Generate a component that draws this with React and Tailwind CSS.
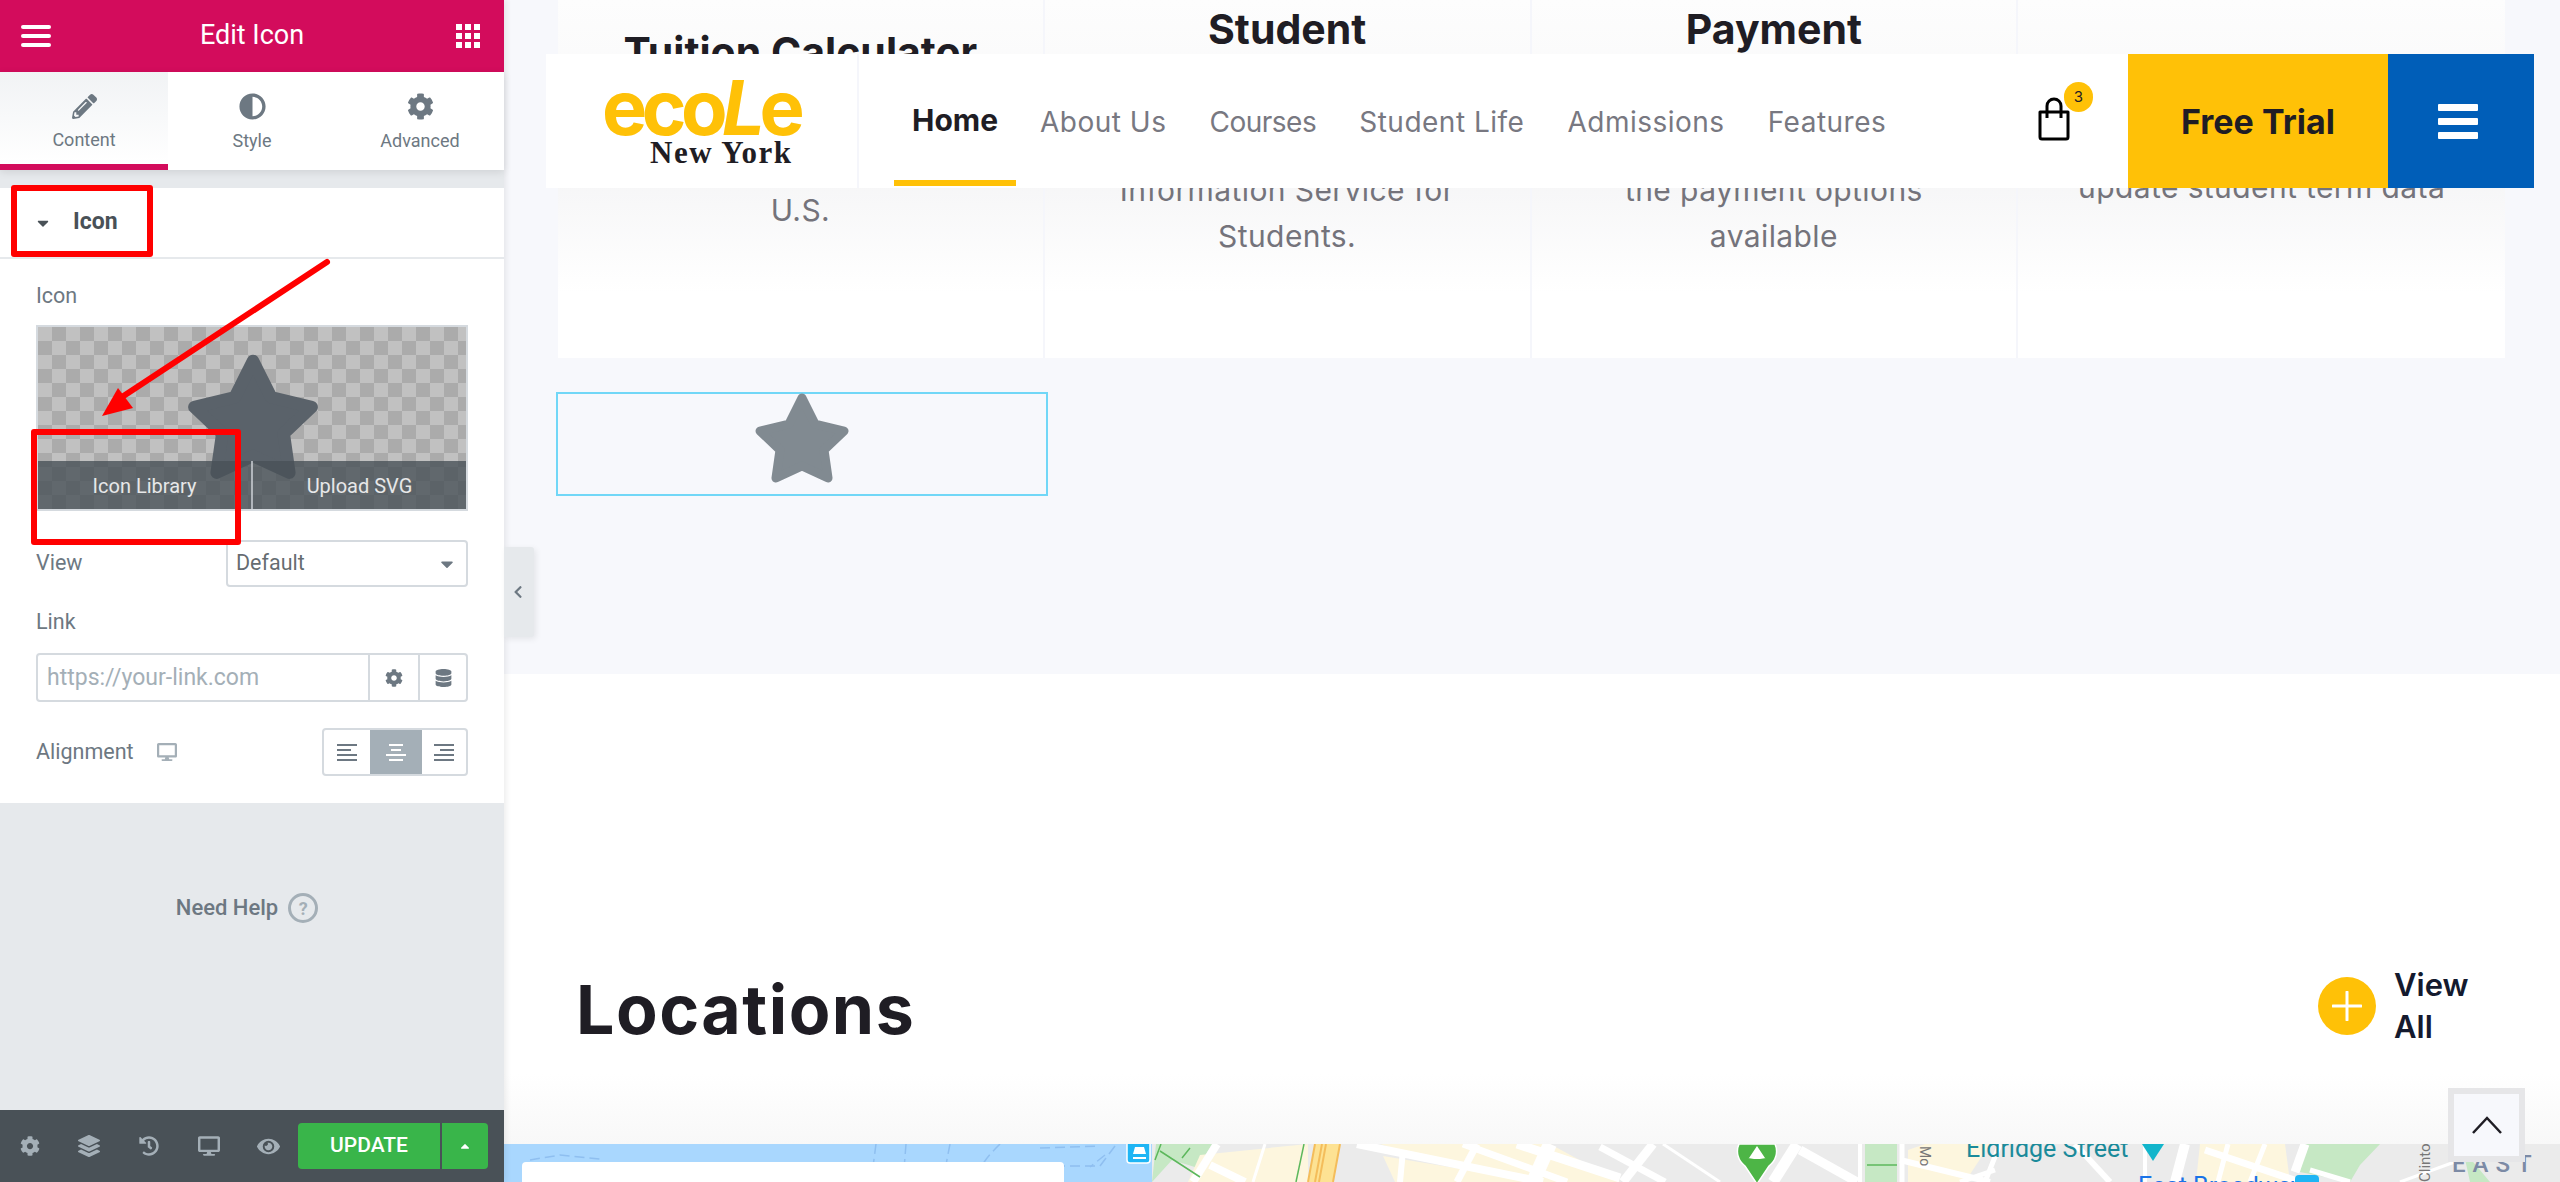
import React from 'react';
import { FaPencilAlt, FaAdjust, FaCog, FaDatabase, FaLayerGroup, FaHistory, FaDesktop, FaEye, FaCaretDown, FaCaretUp, FaChevronLeft } from 'react-icons/fa';

const sans = 'font-["Roboto",sans-serif]';
const site = 'font-["Inter",sans-serif]';

function Star({ className }) {
  return (
    <svg viewBox="0 0 96 91" className={className} fill="currentColor" stroke="currentColor" strokeWidth="9" strokeLinejoin="round">
      <polygon points="48,5 61,31 90,38 70,57 74,85 48,73 22,85 26,57 6,38 35,31" />
    </svg>
  );
}

function AlignIcon({ side, className }) {
  const rows = side === 'left' ? [[0, 20], [0, 14], [0, 20], [0, 20]] : side === 'center' ? [[3, 14], [5, 10], [0, 20], [3, 14]] : [[0, 20], [6, 14], [0, 20], [0, 20]];
  return (
    <svg viewBox="0 0 20 18" className={className} fill="currentColor">
      {rows.map((r, i) => <rect key={i} x={r[0]} y={1 + i * 5} width={r[1]} height="2" />)}
    </svg>
  );
}

function Sidebar() {
  return (
    <aside className={`w-[504px] h-full flex flex-col shrink-0 bg-[#e6e9ec] ${sans} shadow-[2px_0_6px_rgba(0,0,0,0.08)] z-10`}>
      <div className="h-[72px] bg-[#d30c5c] flex items-center justify-between pl-[21px] pr-[24px] text-white">
        <svg viewBox="0 0 30 22" className="w-[30px] h-[22px]" fill="currentColor">
          <rect y="0" width="30" height="4" rx="2" /><rect y="9" width="30" height="4" rx="2" /><rect y="18" width="30" height="4" rx="2" />
        </svg>
        <span className="text-[27px] -ml-[3px] -mt-[2px]">Edit Icon</span>
        <svg viewBox="0 0 24 24" className="w-[24px] h-[24px]" fill="currentColor">
          {[0, 9, 18].flatMap((x) => [0, 9, 18].map((y) => <rect key={`${x}-${y}`} x={x} y={y} width="6" height="6" />))}
        </svg>
      </div>
      <div className="h-[98px] bg-white grid grid-cols-3 shadow-[0_2px_8px_rgba(0,0,0,0.1)] text-[#6d7882] text-[18px]">
        <div className="flex flex-col items-center pt-[22px] gap-[7px] border-b-[6px] border-[#d30c5c] bg-gradient-to-b from-[#f1f3f5] to-white">
          <FaPencilAlt className="w-[25px] h-[25px]" />
          <span>Content</span>
        </div>
        <div className="flex flex-col items-center pt-[21px] gap-[7px]">
          <FaAdjust className="w-[27px] h-[27px]" />
          <span>Style</span>
        </div>
        <div className="flex flex-col items-center pt-[21px] gap-[7px]">
          <FaCog className="w-[27px] h-[27px]" />
          <span>Advanced</span>
        </div>
      </div>
      <div className="mt-[18px] bg-white h-[615px]">
        <div className="h-[71px] flex items-center border-b-2 border-[#e6e9ec] pl-[34px] gap-[21px] text-[#495157]">
          <FaCaretDown className="w-[18px] h-[18px]" />
          <span className="text-[23px] font-bold">Icon</span>
        </div>
        <div className="px-[36px] text-[#6d7882] text-[21.5px]">
          <div className="mt-[24px] leading-[26px]">Icon</div>
          <div className="mt-[16px] h-[186px] relative border-2 border-[#d5dadf] overflow-hidden bg-[conic-gradient(#ababab_25%,#c1c1c1_0_50%,#ababab_0_75%,#c1c1c1_0)] bg-[length:28px_28px]">
            <Star className="absolute left-[148px] top-[27px] w-[134px] h-[127px] text-[#5a626a]" />
            <div className="absolute left-0 right-0 bottom-0 h-[48px] flex bg-[#495157]/80 text-white/85 text-[20px]">
              <div className="flex-1 flex items-center justify-center pt-[2px] border-r-2 border-[#d5dadf]/70">Icon Library</div>
              <div className="flex-1 flex items-center justify-center pt-[2px]">Upload SVG</div>
            </div>
          </div>
          <div className="mt-[29px] flex items-center justify-between">
            <span>View</span>
            <div className="w-[242px] h-[47px] border-2 border-[#d5dadf] rounded-[4px] flex items-center justify-between pl-[8px] pr-[9px] text-[#495157]/85">
              <span>Default</span>
              <FaCaretDown className="w-[20px] h-[20px] text-[#6d7882]" />
            </div>
          </div>
          <div className="mt-[22px] leading-[26px]">Link</div>
          <div className="mt-[18px] h-[49px] flex border-2 border-[#d5dadf] rounded-[4px]">
            <div className="flex-1 flex items-center pl-[9px] pt-[2px] text-[#a4afb7] text-[23px]">https://your-link.com</div>
            <div className="w-[50px] flex items-center justify-center border-l-2 border-[#d5dadf]"><FaCog className="w-[18px] h-[18px]" /></div>
            <div className="w-[48px] flex items-center justify-center border-l-2 border-[#d5dadf]"><FaDatabase className="w-[17px] h-[18px]" /></div>
          </div>
          <div className="mt-[26px] flex items-center justify-between">
            <div className="flex items-center gap-[23px]">
              <span>Alignment</span>
              <FaDesktop className="w-[20px] h-[18px] text-[#a4afb7]" />
            </div>
            <div className="w-[146px] h-[48px] border-2 border-[#d5dadf] rounded-[4px] flex overflow-hidden">
              <div className="w-[46px] flex items-center justify-center"><AlignIcon side="left" className="w-[20px] h-[18px]" /></div>
              <div className="w-[52px] flex items-center justify-center bg-[#a4afb7] text-white"><AlignIcon side="center" className="w-[20px] h-[18px]" /></div>
              <div className="flex-1 flex items-center justify-center"><AlignIcon side="right" className="w-[20px] h-[18px]" /></div>
            </div>
          </div>
        </div>
      </div>
      <div className="flex-1 flex items-start justify-center pt-[90px] pr-[10px] gap-[10px] text-[#6d7882]">
        <span className="text-[22px] font-medium leading-[30px]">Need Help</span>
        <span className="w-[30px] h-[30px] rounded-full border-[3px] border-[#a4afb7] text-[#a4afb7] flex items-center justify-center text-[18px] font-bold">?</span>
      </div>
      <div className="h-[72px] bg-[#495157] flex items-center text-[#a4afb7]">
        <div className="w-[298px] grid grid-cols-5 place-items-center">
          <FaCog className="w-[20px] h-[20px]" />
          <FaLayerGroup className="w-[22px] h-[22px]" />
          <FaHistory className="w-[20px] h-[20px]" />
          <FaDesktop className="w-[22px] h-[20px]" />
          <FaEye className="w-[23px] h-[21px]" />
        </div>
        <div className="w-[190px] h-[46px] flex text-white rounded-[4px] overflow-hidden bg-[#39b54a]">
          <div className="w-[144px] flex items-center justify-center text-[21px] font-medium border-r-2 border-[#495157]">UPDATE</div>
          <div className="flex-1 flex items-center justify-center"><FaCaretUp className="w-[14px] h-[14px]" /></div>
        </div>
      </div>
    </aside>
  );
}

function InfoColumn({ title, text, titleTop, textTop, last }) {
  return (
    <div className={`flex flex-col items-center text-center ${last ? '' : 'border-r-2 border-[#f5f6fb]'}`}>
      {title && <h3 className="text-[41px] leading-[48px] font-bold text-[#1f1d24] whitespace-nowrap" style={{ marginTop: titleTop }}>{title}</h3>}
      <p className="text-[30px] tracking-[0.4px] leading-[46px] text-[#74737b]" style={{ marginTop: textTop }}>
        {text.map((line) => <span key={line} className="block whitespace-nowrap">{line}</span>)}
      </p>
    </div>
  );
}

function TopBar() {
  return (
    <header className={`absolute left-[42px] top-[54px] w-[1988px] h-[134px] bg-white flex ${site}`}>
      <div className="w-[313px] border-r-2 border-[#f5f6fb] relative shrink-0">
        <span className="absolute left-[56px] top-[22px] text-[76px] leading-[62px] font-bold tracking-[-5.5px] text-[#ffc107]">eco<span className="italic">L</span>e</span>
        <span className='absolute left-[104px] top-[84px] text-[31px] leading-[30px] font-bold tracking-[1.5px] text-[#1f1d24] font-["Liberation_Serif",serif]'>New York</span>
      </div>
      <nav className="flex h-full pl-[35px] gap-[24px] text-[28px]">
        <div className="w-[122px] h-[132px] border-b-[6px] border-[#ffc107] flex items-center justify-center font-bold text-[30px] text-[#1f1d24] pt-[6px]">Home</div>
        <div className="flex items-center gap-[43px] tracking-[0.5px] text-[#787881] pt-[2px]">
          <span className="whitespace-nowrap">About Us</span>
          <span className="whitespace-nowrap tracking-[-0.5px]">Courses</span>
          <span className="whitespace-nowrap">Student Life</span>
          <span className="whitespace-nowrap">Admissions</span>
          <span className="whitespace-nowrap">Features</span>
        </div>
      </nav>
      <div className="absolute left-[1492px] top-[43px] text-black">
        <svg viewBox="0 0 32 44" className="w-[32px] h-[44px]" fill="none" stroke="currentColor" strokeWidth="3" strokeLinejoin="round">
          <path d="M2 15h28v25a2 2 0 0 1-2 2H4a2 2 0 0 1-2-2z" />
          <path d="M9 21V9a7 7 0 0 1 14 0v12" />
        </svg>
        <span className="absolute left-[26px] -top-[15px] w-[29px] h-[30px] rounded-full bg-[#ffc107] text-[#1f1d24] text-[15px] flex items-center justify-center">3</span>
      </div>
      <div className="absolute left-[1582px] top-0 bottom-0 w-[260px] bg-[#ffc107] flex items-center justify-center text-[34px] font-bold text-[#1f1d24]">Free Trial</div>
      <div className="absolute left-[1842px] top-0 bottom-0 w-[146px] bg-[#005eb8] flex items-center justify-center pr-[6px]">
        <svg viewBox="0 0 40 35" className="w-[40px] h-[35px]" fill="#fff">
          <rect width="40" height="7" rx="1" /><rect y="14" width="40" height="7" rx="1" /><rect y="28" width="40" height="7" rx="1" />
        </svg>
      </div>
    </header>
  );
}

function MapStrip() {
  const roads = [
    [1217, 1144, 1193, 1182, 8], [1210, 1165, 1245, 1182, 8], [1265, 1144, 1253, 1182, 3],
    [1357, 1144, 1543, 1182, 8], [1403, 1150, 1400, 1182, 6], [1477, 1144, 1457, 1182, 7],
    [1550, 1144, 1533, 1182, 14], [1517, 1144, 1620, 1178, 9], [1463, 1144, 1567, 1182, 7],
    [1600, 1147, 1665, 1182, 7], [1663, 1144, 1720, 1182, 3], [1653, 1144, 1623, 1182, 9],
    [1797, 1144, 1773, 1182, 11], [1800, 1150, 1857, 1182, 9], [1860, 1144, 1860, 1182, 4],
    [1902, 1144, 1902, 1182, 5], [1900, 1160, 1990, 1182, 6], [1995, 1170, 1960, 1182, 5],
    [2000, 1144, 1985, 1182, 5], [2075, 1144, 2110, 1182, 6], [2145, 1144, 2145, 1182, 4],
    [2185, 1144, 2175, 1182, 10], [2205, 1150, 2300, 1182, 7], [2228, 1144, 2218, 1182, 5],
    [2265, 1144, 2250, 1182, 5], [2305, 1144, 2295, 1172, 9], [2310, 1170, 2350, 1182, 5],
    [2400, 1182, 2460, 1160, 3],
  ];
  return (
    <svg viewBox="504 1144 2056 38" className="w-full h-[38px] block" fontFamily="Roboto, sans-serif">
      <rect x="504" y="1144" width="2056" height="38" fill="#ebebeb" />
      <rect x="504" y="1144" width="648" height="38" fill="#a9d7fe" />
      <g fill="none" stroke="#8fbff0" strokeWidth="1.5" strokeDasharray="10 5">
        <path d="M530 1160l30-5 40 4" />
        <path d="M876 1144l-5 38M906 1144l-3 38M950 1144c-3 15-5 25-6 38M1000 1144c-10 10-20 20-25 38" />
        <path d="M1040 1148l60-2M1040 1166h60l15-20" />
        <path d="M1105 1155l-15 12" />
      </g>
      <polygon points="1156,1144 1212,1144 1198,1168 1172,1160 1152,1182" fill="#c6e8c4" />
      <polygon points="1200,1155 1308,1144 1308,1182 1188,1182" fill="#fdf6de" />
      <polygon points="1383,1156 1540,1182 1395,1182" fill="#fdf6de" />
      <polygon points="1380,1144 1550,1144 1620,1182 1500,1182" fill="#fdf6de" />
      <polygon points="1865,1144 1897,1144 1897,1182 1865,1182" fill="#c6e8c4" />
      <polygon points="1908,1150 1925,1144 1990,1144 1965,1182 1908,1182" fill="#fdf6de" />
      <polygon points="2200,1144 2285,1144 2290,1182 2196,1182" fill="#fdf6de" />
      <polygon points="2305,1144 2380,1144 2360,1165 2350,1182 2300,1172" fill="#c6e8c4" />
      <polygon points="2463,1150 2490,1182 2470,1182" fill="#c6e8c4" />
      <path d="M1304 1144l-8 38" stroke="#5cb85c" strokeWidth="1.5" fill="none" />
      <path d="M1308 1182l7-38h25l-7 38z" fill="#fde293" />
      <path d="M1308 1182l7-38M1322 1144l-7 38M1326 1144l-7 38M1340 1144l-7 38" stroke="#f4bd5b" strokeWidth="2" />
      {roads.map((r, i) => <line key={i} x1={r[0]} y1={r[1]} x2={r[2]} y2={r[3]} stroke="#fff" strokeWidth={r[4]} />)}
      <path d="M1155 1160l6-16M1160 1151l40 26M1190 1148l-8 10" stroke="#5cb85c" strokeWidth="1.5" fill="none" />
      <path d="M1867 1165h30" stroke="#5cb85c" strokeWidth="1.5" />
      <rect x="1127" y="1136" width="23" height="27" rx="3" fill="#1fb5f4" stroke="#fff" strokeWidth="1.5" />
      <path d="M1133 1154l2-7h9l2 7zM1133 1157h13v2h-13z" fill="#fff" />
      <path d="M1739 1144a18 18 0 0 0 6 22l12 18 12-18a18 18 0 0 0 6-22z" fill="#4db546" stroke="#fff" strokeWidth="1.5" />
      <path d="M1757 1146l8 12h-5l6 1h-18l6-1h-5z" fill="#fff" />
      <text x="1966" y="1157" fontSize="25" fill="#1a8a9a">Eldridge Street</text>
      <path d="M2142 1144h22l-11 17z" fill="#12b5cb" />
      <text x="2138" y="1195" fontSize="25" fill="#1a73e8">East Broadway</text>
      <rect x="2295" y="1175" width="24" height="20" rx="4" fill="#1fb5f4" />
      <text x="1920" y="1146" fontSize="14" fill="#777" transform="rotate(90 1920 1146)" >Mo</text>
      <text x="2430" y="1182" fontSize="15" fill="#777" transform="rotate(-90 2430 1182)">Clinton</text>
      <text x="2452" y="1172" fontSize="24" fill="#7c8aa5" letterSpacing="7" fontWeight="500">EAST</text>
    </svg>
  );
}

export default function App() {
  return (
    <div className="relative w-full h-[1182px] flex overflow-hidden bg-white">
      <Sidebar />
      <main className={`relative flex-1 flex flex-col ${site}`}>
        <section className="h-[674px] bg-[#f7f8fc] pl-[54px] pr-[55px] shrink-0">
          <div className="h-[358px] grid grid-cols-4 bg-[linear-gradient(180deg,#fdfdfd_0%,#f6f6f7_50%,#fff_82%)]">
            <InfoColumn title="Tuition Calculator" text={['U.S.']} titleTop="28px" textTop="111px" />
            <InfoColumn title="Student" text={['Information Service for', 'Students.']} titleTop="5px" textTop="114px" />
            <InfoColumn title="Payment" text={['the payment options', 'available']} titleTop="5px" textTop="114px" />
            <InfoColumn text={['update student term data']} textTop="164px" last />
          </div>
          <div className="mt-[34px] -ml-[2px] w-[492px] h-[104px] border-2 border-[#71d7f7] flex justify-center">
            <Star className="w-[96px] h-[91px] text-[#818a91] -mt-[1px]" />
          </div>
        </section>
        <section className="h-[470px] shrink-0 flex justify-between items-start pl-[72px] pr-[90px] pt-[290px] bg-[linear-gradient(180deg,#fff_85%,#f8f8f8_100%)]">
          <h2 className="text-[68px] tracking-[1.5px] leading-[84px] mt-[3px] font-bold text-[#1f1d24]">Locations</h2>
          <div className="flex items-center gap-[18px]">
            <span className="w-[58px] h-[58px] rounded-full bg-[#ffc107] flex items-center justify-center">
              <svg viewBox="0 0 30 30" className="w-[30px] h-[30px]" stroke="#fff" strokeWidth="3" strokeLinecap="round"><path d="M15 1v28M1 15h28" /></svg>
            </span>
            <span className="w-[76px] text-[31px] leading-[42px] font-semibold text-[#141a2e]">View All</span>
          </div>
        </section>
        <div className="relative flex-1 overflow-hidden">
          <MapStrip />
          <div className="absolute left-[18px] top-[18px] w-[542px] h-[40px] bg-white rounded-[4px]" />
        </div>
        <div className="absolute left-[1944px] top-[1088px] w-[77px] h-[74px] border-[6px] border-[#e6e6e8] bg-[#f7f8fc] flex items-center justify-center">
          <svg viewBox="0 0 30 18" className="w-[30px] h-[18px]" fill="none" stroke="#1f1d24" strokeWidth="2.5"><path d="M1 17L15 2l14 15" /></svg>
        </div>
        <TopBar />
      </main>
      <div className="absolute z-20 left-[504px] top-[547px] w-[30px] h-[90px] pr-[3px] bg-[#e6e9ec] rounded-r-[3px] shadow-[2px_2px_6px_rgba(0,0,0,0.08)] flex items-center justify-center text-[#6d7882]">
        <FaChevronLeft className="w-[12px] h-[14px]" />
      </div>
      <div className="absolute z-20 left-[11px] top-[185px] w-[142px] h-[72px] border-[6px] border-[#ff0000] rounded-[3px]" />
      <div className="absolute z-20 left-[31px] top-[429px] w-[210px] h-[116px] border-[6px] border-[#ff0000] rounded-[3px]" />
      <svg viewBox="0 0 340 430" className="absolute z-20 left-0 top-0 w-[340px] h-[430px]" fill="#ff0000">
        <line x1="327" y1="262" x2="122" y2="397" stroke="#ff0000" strokeWidth="6" strokeLinecap="round" />
        <polygon points="102,416 118,388 133,408" />
      </svg>
    </div>
  );
}
